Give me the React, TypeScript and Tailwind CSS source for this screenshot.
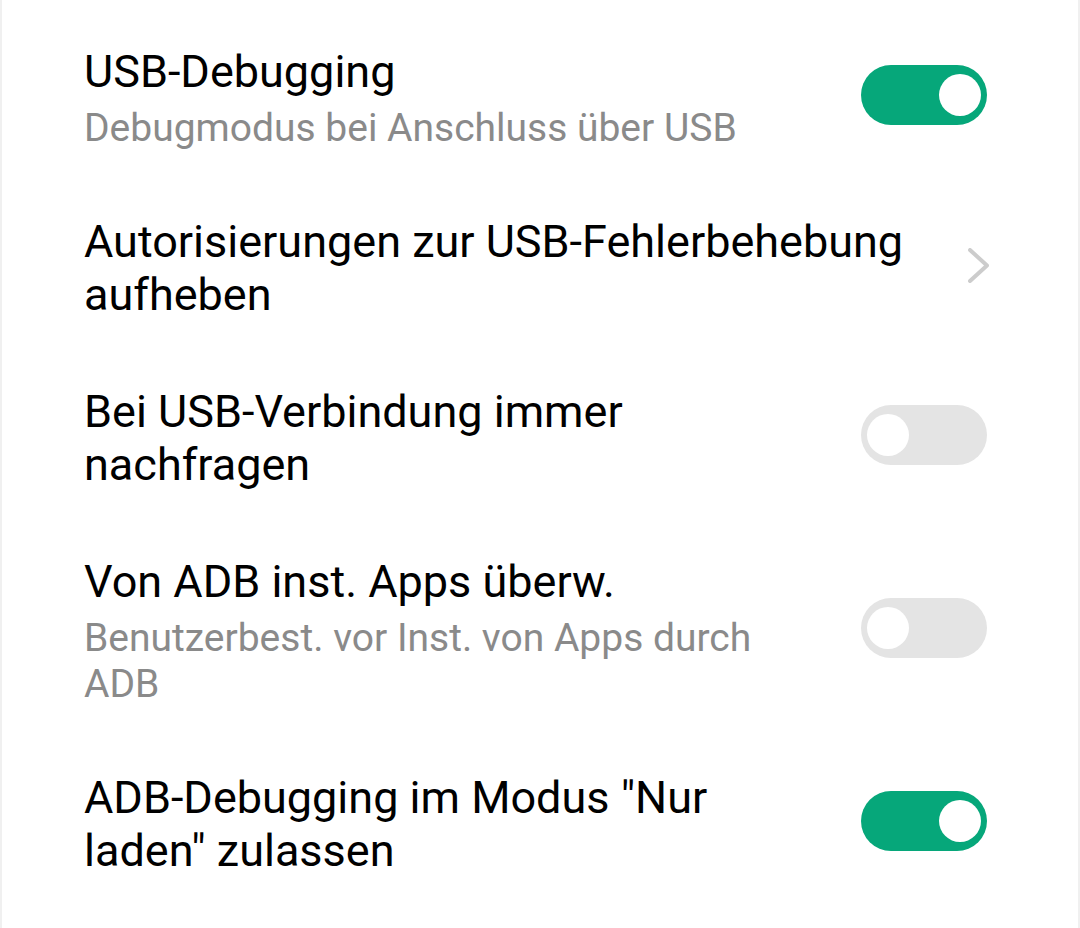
import React from 'react';

type Row = {
    title: string;
    subtitle?: string;
    kind: 'on' | 'off' | 'link';
};

const rows: Row[] = [
    { title: 'USB-Debugging', subtitle: 'Debugmodus bei Anschluss über USB', kind: 'on' },
    { title: 'Autorisierungen zur USB-Fehlerbehebung aufheben', kind: 'link' },
    { title: 'Bei USB-Verbindung immer nachfragen', kind: 'off' },
    { title: 'Von ADB inst. Apps überw.', subtitle: 'Benutzerbest. vor Inst. von Apps durch ADB', kind: 'off' },
    { title: 'ADB-Debugging im Modus "Nur laden" zulassen', kind: 'on' },
];

const Toggle = ({ on }: { on: boolean }) => (
    <div className={`w-[126px] h-[60px] rounded-full shrink-0 flex items-center px-[6px] mb-[6px] ${on ? 'bg-[#06a77a] justify-end' : 'bg-[#e4e4e4] justify-start'}`}>
        <div className="w-[42px] h-[42px] rounded-full bg-white" />
    </div>
);

const Chevron = () => (
    <svg width="21" height="35" viewBox="0 0 21 35" className="shrink-0 mr-[-2px] mb-[6px]">
        <polyline points="2,2 19,17.5 2,33" fill="none" stroke="#cccccc" strokeWidth="4" strokeLinecap="round" strokeLinejoin="round" />
    </svg>
);

const App = () => {
    return (
        <div className="w-full h-[928px] bg-white border-x-2 border-[#f0f0f0] pt-[13px] overflow-hidden" style={{ fontFamily: 'Roboto, "Noto Sans", sans-serif' }}>
            {rows.map((row, i) => (
                <div key={i} className="flex items-center gap-[50px] pl-[82px] pr-[91px] py-[32px]">
                    <div className="flex-1 min-w-0">
                        <div className="text-[45px] leading-[53px] text-black">{row.title}</div>
                        {row.subtitle && (
                            <div className="text-[39px] leading-[46px] text-[#8a8a8a] mt-[7px]">{row.subtitle}</div>
                        )}
                    </div>
                    {row.kind === 'link' ? <Chevron /> : <Toggle on={row.kind === 'on'} />}
                </div>
            ))}
        </div>
    );
};

export default App;
